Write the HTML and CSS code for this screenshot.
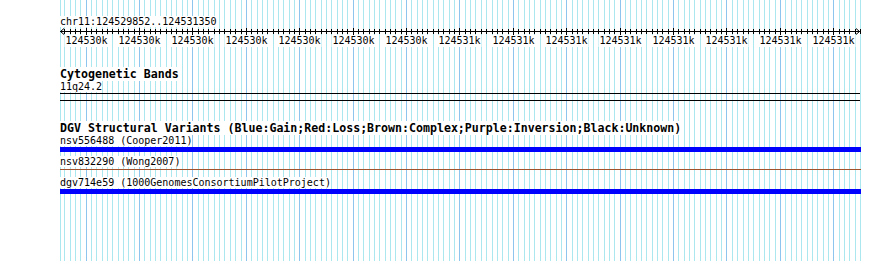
FILE: index.html
```html
<!DOCTYPE html>
<html lang="en">
<head>
  <meta charset="UTF-8">
  <title>chr11:124529852..124531350</title>
  <link rel="stylesheet" href="styles.css">
</head>
<body>
  <div class="panel">
    <svg class="grid" id="grid" width="890" height="261"></svg>

    <div class="tracks">
      <div class="segment"><span class="key">chr11:124529852..124531350</span></div>
      <svg class="ruler" id="ruler" width="890" height="21"></svg>

      <!-- Cytogenetic bands -->
      <div class="track cyto">
        <div class="track-title"><span class="key">Cytogenetic Bands</span></div>
        <div class="feature-label"><span class="key">11q24.2</span></div>
        <div class="band"></div>
      </div>

      <!-- DGV -->
      <div class="track dgv">
        <div class="track-title"><span class="key">DGV Structural Variants (Blue:Gain;Red:Loss;Brown:Complex;Purple:Inversion;Black:Unknown)</span></div>
        <div class="feature">
          <div class="feature-label"><span class="key">nsv556488 (Cooper2011)</span></div>
          <div class="glyph gain"></div>
        </div>
        <div class="feature">
          <div class="feature-label"><span class="key">nsv832290 (Wong2007)</span></div>
          <div class="glyph complex"></div>
        </div>
        <div class="feature">
          <div class="feature-label"><span class="key">dgv714e59 (1000GenomesConsortiumPilotProject)</span></div>
          <div class="glyph gain"></div>
        </div>
      </div>
    </div>
  </div>

  <script>
    const ns = 'http://www.w3.org/2000/svg';
    const start = 124529852, end = 124531350;
    const left = 60, width = 800;
    const scale = width / (end - start);

    function px(pos) {
      return Math.round(left + (pos - start) * scale);
    }
    function add(parent, tag, attrs) {
      const el = document.createElementNS(ns, tag);
      for (let k in attrs) el.setAttribute(k, attrs[k]);
      parent.appendChild(el);
      return el;
    }
    // perl style rounding (half to even)
    function kb(pos) {
      const k = pos / 1000;
      let r = Math.round(k);
      if (k - Math.floor(k) === 0.5 && r % 2) r -= 1;
      return r + 'k';
    }

    const grid = document.getElementById('grid');
    add(grid, 'line', { x1: left + 0.5, x2: left + 0.5, y1: 0, y2: 261, class: 'minor' });
    for (let pos = 124529860; pos <= end; pos += 10) {
      const x = px(pos) + 0.5;
      add(grid, 'line', { x1: x, x2: x, y1: 0, y2: 261, class: pos % 100 === 0 ? 'major' : 'minor' });
    }

    const ruler = document.getElementById('ruler');
    const y = 4.5;
    add(ruler, 'line', { x1: left, x2: left + width, y1: y, y2: y, class: 'axis' });
    add(ruler, 'polyline', { points: `${left + 4},${y - 3} ${left + 0.5},${y} ${left + 4},${y + 3}`, class: 'axis' });
    add(ruler, 'polyline', { points: `${left + width - 4},${y - 3} ${left + width - 0.5},${y} ${left + width - 4},${y + 3}`, class: 'axis' });
    for (let pos = 124529860; pos <= end; pos += 10) {
      const x = px(pos) + 0.5;
      const major = pos % 100 === 0;
      add(ruler, 'line', { x1: x, x2: x, y1: major ? 1 : 2, y2: major ? 8 : 7, class: 'axis' });
      if (major) {
        add(ruler, 'rect', { x: x - 22, y: 8, width: 44, height: 12, class: 'label-bg' });
        const t = add(ruler, 'text', { x: x, y: 17, class: 'label' });
        t.textContent = kb(pos);
      }
    }
  </script>
</body>
</html>
```

FILE: styles.css
```css
body {
    margin: 0;
    background: #ffffff;
    font-family: "DejaVu Sans Mono", "Liberation Mono", monospace;
    color: #000000;
}

.panel {
    position: relative;
    width: 890px;
    height: 261px;
    overflow: hidden;
}

.grid {
    position: absolute;
    left: 0;
    top: 0;
}
.grid .minor {
    stroke: #aae7ef;
    stroke-width: 1;
}
.grid .major {
    stroke: #8ec5ee;
    stroke-width: 1;
}

.tracks {
    position: relative;
}

.key {
    background: #ffffff;
}

.segment {
    margin: 16px 0 0 60px;
    height: 11px;
    line-height: 11px;
    font-size: 10px;
}

.ruler {
    display: block;
}
.ruler .axis {
    stroke: #000000;
    stroke-width: 1;
    fill: none;
}
.ruler .label-bg {
    fill: #ffffff;
}
.ruler .label {
    font-family: "DejaVu Sans Mono", "Liberation Mono", monospace;
    font-size: 10px;
    text-anchor: middle;
    fill: #000000;
}

.track-title {
    margin-left: 60px;
    height: 13px;
    line-height: 13px;
    font-size: 11.6px;
    font-weight: bold;
    white-space: nowrap;
}

.feature-label {
    margin-left: 60px;
    height: 11px;
    line-height: 11px;
    font-size: 10px;
    white-space: nowrap;
}

.cyto {
    margin-top: 20px;
}
.band {
    margin: 1px 0 0 60px;
    width: 800px;
    height: 6px;
    border-top: 1px solid #000000;
    border-bottom: 1px solid #000000;
}

.dgv {
    margin-top: 21px;
}
.feature {
    height: 21px;
}
.glyph {
    margin: 1px 0 0 60px;
    width: 801px;
    height: 5px;
}
.glyph.gain {
    background: #0000ff;
}
.glyph.complex {
    height: 1px;
    margin-top: 2px;
    background: #a0522d;
}
```
